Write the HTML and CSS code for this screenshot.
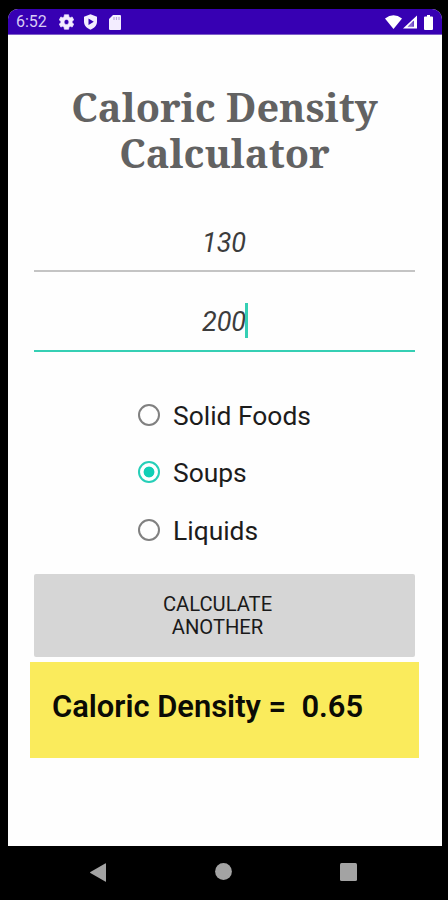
FILE: index.html
```html
<!DOCTYPE html>
<html lang="en">
<head>
<meta charset="utf-8">
<title>Caloric Density Calculator</title>
<link rel="stylesheet" href="styles.css">
</head>
<body>
<div class="phone">
  <div class="screen">
    <header class="status">
      <span class="time">6:52</span>
      <svg class="gear" width="15" height="16" viewBox="2.500 2.500 19 19" preserveAspectRatio="none"><path fill="#f3edff" stroke="#f3edff" stroke-width=".8" fill-rule="evenodd" d="M19.100 12.900a7 7 0 0 0 0-1.800l2.100-1.600-2-3.500-2.500 1a7 7 0 0 0-1.600-.9L14.700 3.400h-5.400L8.900 6.100a7 7 0 0 0-1.600.9l-2.500-1-2 3.500 2.100 1.600a7 7 0 0 0 0 1.800l-2.100 1.600 2 3.500 2.500-1a7 7 0 0 0 1.600.9l.4 2.700h5.400l.4-2.700a7 7 0 0 0 1.600-.9l2.500 1 2-3.500zM12 15.100a3.100 3.100 0 1 1 0-6.200 3.100 3.100 0 0 1 0 6.200z"/></svg>
      <svg class="shield" width="13" height="16" viewBox="0 0 13 16"><path fill="#f3edff" fill-rule="evenodd" d="M6.500.3 13 2.800v5c0 3.700-2.700 6.500-6.500 7.900C2.700 14.300 0 11.500 0 7.800v-5zM4.500 4.500v6.600L9.800 7.800z"/></svg>
      <svg class="card" width="12" height="15" viewBox="0 0 12 15"><path fill="#f3edff" d="M4 0h7q1 0 1 1v13q0 1-1 1H1q-1 0-1-1V4z"/><path stroke="#b9a3dc" stroke-width="1.200" d="M5 2v3M7.500 2v3M10 2v3"/></svg>
      <span class="spacer"></span>
      <svg class="wifi" width="17" height="14" viewBox="0 0 17 14"><path fill="#fff" d="M0 3.500Q8.500-3 17 3.500L8.500 14z"/></svg>
      <svg class="signal" width="14" height="14" viewBox="0 0 15 14"><path fill="#fff" fill-rule="evenodd" d="M15 0v14H0zM11.500 5.500l-6.500 6.500h6.500z"/><path fill="#cfc0ef" d="M10.500 6.500v6H4.500z" opacity=".55"/></svg>
      <svg class="battery" width="9" height="15" viewBox="0 0 9 15"><path fill="#fff" d="M3 0h3v1.500h2q1 0 1 1V14q0 1-1 1H1q-1 0-1-1V2.500q0-1 1-1h2z"/></svg>
    </header>
    <main class="content">
      <h1 class="title"><span class="line">Caloric Density</span><span class="line">Calculator</span></h1>
      <div class="field"><span class="value">130</span></div>
      <div class="field focused"><span class="value">200<i class="caret"></i></span></div>
      <div class="options">
        <label class="option"><span class="radio"></span><span class="name">Solid Foods</span></label>
        <label class="option"><span class="radio checked"></span><span class="name">Soups</span></label>
        <label class="option"><span class="radio"></span><span class="name">Liquids</span></label>
      </div>
      <button class="calculate">CALCULATE<br>ANOTHER</button>
      <div class="result">Caloric Density =&nbsp; 0.65</div>
    </main>
  </div>
  <nav class="navbar">
    <svg width="16" height="19" viewBox="0 0 16 19"><path fill="#a3a3a3" d="M16 .8v17.400q0 .8-.8.4L.4 10q-.7-.5 0-1L15.200.4q.8-.4.8.4z"/></svg>
    <svg width="17" height="17" viewBox="0 0 17 17"><circle cx="8.500" cy="8.500" r="8.400" fill="#a3a3a3"/></svg>
    <svg width="17" height="18" viewBox="0 0 17 18"><rect width="17" height="18" rx="1.500" fill="#a3a3a3"/></svg>
  </nav>
</div>
</body>
</html>
```
FILE: styles.css
```css
* { box-sizing: border-box; }
body { margin: 0; background: #000; font-family: Roboto, "Liberation Sans", sans-serif; color: #1c1c1c; }
.phone { width: 448px; height: 900px; padding: 9px 6px 0 8px; display: flex; flex-direction: column; overflow: hidden; }
.screen { height: 837px; background: #fefefe; border-radius: 10px 10px 0 0; overflow: hidden; }
.status { height: 26px; background: #3700b3; border-bottom: 1px solid #7f5fc8; display: flex; align-items: center; padding: 1px 9px 0 8px; }
.time { width: 43px; font-size: 16px; line-height: 24px; color: #d9ccf5; }
.shield { margin-left: 10px; }
.card { margin-left: 12px; }
.spacer { flex: 1; }
.signal { margin-left: 1px; }
.battery { margin-left: 7px; }
.content { padding: 0 23px 0 22px; }
.title { margin: 49px 0 0; font-family: "Noto Serif", "Droid Serif", "DejaVu Serif Condensed", "DejaVu Serif", serif; font-weight: 700; font-size: 39.700px; line-height: 46px; color: #626262; text-align: center; }
.line { display: block; white-space: nowrap; }
.field { height: 79px; margin: 0 4px; border-bottom: 2px solid #c4c4c4; display: flex; justify-content: center; padding-top: 34px; font-size: 27px; line-height: 32px; font-style: italic; color: #3c3c3c; }
.title + .field { margin-top: 17px; }
.focused { height: 80px; border-color: #35cfb4; }
.value { position: relative; left: -.5px; }
.caret { position: absolute; right: -2px; top: -3px; width: 3px; height: 35px; background: #35cfb4; }
.options { padding: 34px 0 0 108px; }
.option { height: 57.500px; display: flex; align-items: center; gap: 13px; font-size: 26.400px; }
.name { padding-top: 2px; }
.radio { width: 22px; height: 22px; border: 2px solid #808080; border-radius: 50%; }
.checked { border-color: #26cfb8; background: radial-gradient(circle, #10cfb6 5px, #fff 5.800px); }
.calculate { display: block; width: 381px; height: 83px; margin: 15px 4px 0; padding: 1px 14px 0 0; border: 0; border-radius: 2px; background: #d6d6d6; color: #1a1a1a; font-family: inherit; font-size: 20.200px; line-height: 23px; }
.result { height: 96px; margin-top: 5px; padding: 27px 22px 0; background: #faeb5c; color: #0b0b05; font-size: 30.900px; line-height: 36px; font-weight: 600; white-space: nowrap; }
.navbar { flex: 1; display: flex; justify-content: space-between; padding: 17px 85px 0 82px; }
.navbar svg { display: block; }
```
